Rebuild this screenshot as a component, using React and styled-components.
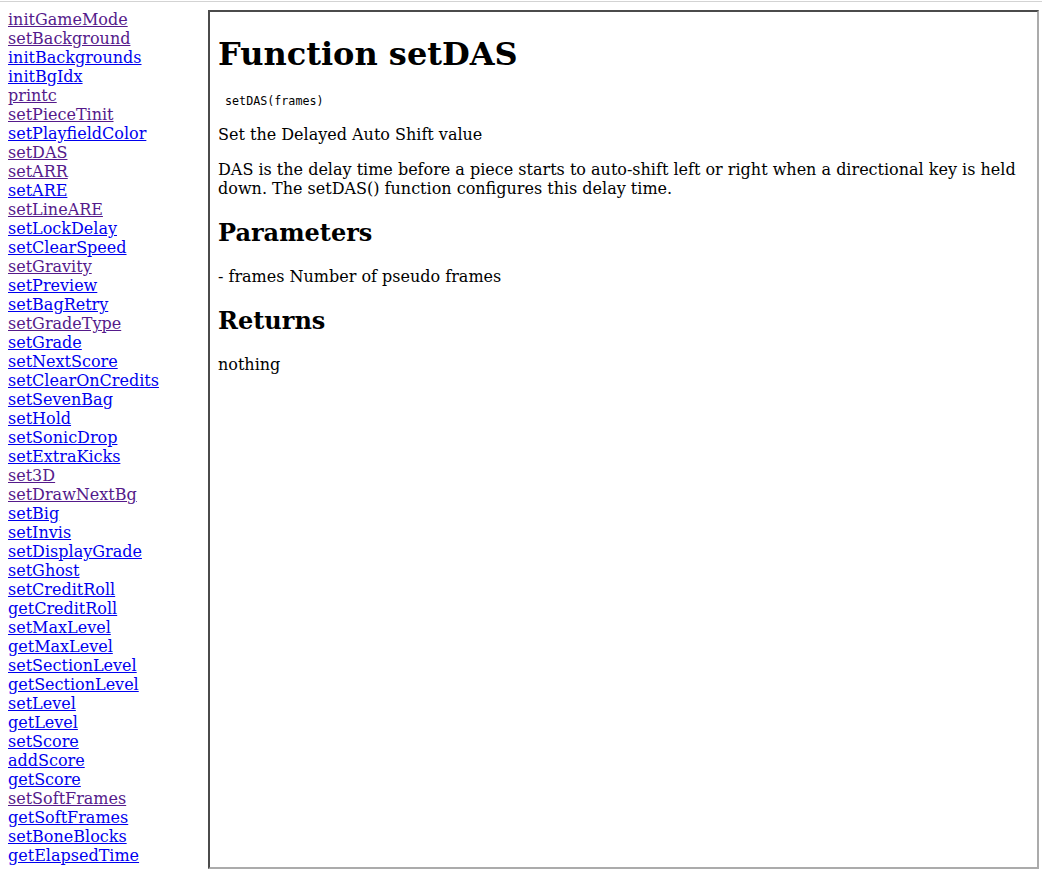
import React from "react";
import styled, { createGlobalStyle } from "styled-components";

const GlobalStyle = createGlobalStyle`
  html, body {
    margin: 0;
    padding: 0;
    background: #ffffff;
  }
  body {
    font-family: "DejaVu Serif", "Liberation Serif", serif;
    font-size: 16px;
    color: #000000;
  }
`;

const TopRule = styled.div`
  height: 1px;
  margin-top: 1px;
  background: #d3d3d3;
`;

const Layout = styled.div`
  display: flex;
  align-items: flex-start;
  padding: 8px 0 0 8px;
`;

const Sidebar = styled.nav`
  width: 200px;
  flex: none;
  display: flex;
  flex-direction: column;
  align-items: flex-start;
`;

const NavLink = styled.a`
  display: block;
  line-height: 19px;
  font-size: 16px;
  font-family: "DejaVu Serif", "Liberation Serif", serif;
  color: ${(p) => (p.$visited ? "#551a8b" : "#0000ee")};
  text-decoration: underline;
`;

const Frame = styled.main`
  box-sizing: border-box;
  flex: none;
  width: 831px;
  height: 859px;
  border-style: solid;
  border-width: 2px;
  border-color: #4b4b4b #ababab #ababab #4b4b4b;
  padding: 0 8px;
  overflow: hidden;
  background: #ffffff;
`;

const Title = styled.h1`
  font-size: 32px;
  font-weight: bold;
  margin: 22.5px 0 21.44px;
`;

const Signature = styled.pre`
  font-family: "DejaVu Sans Mono", "Liberation Mono", monospace;
  font-size: 11.7px;
  line-height: 15px;
  margin: 13px 0;
`;

const Paragraph = styled.p`
  margin: 16px 0;
  line-height: normal;
`;

const SectionTitle = styled.h2`
  font-size: 24px;
  font-weight: bold;
  margin: 19.92px 0;
`;

const links = [
  ["initGameMode", true],
  ["setBackground", true],
  ["initBackgrounds", false],
  ["initBgIdx", false],
  ["printc", true],
  ["setPieceTinit", true],
  ["setPlayfieldColor", false],
  ["setDAS", true],
  ["setARR", true],
  ["setARE", false],
  ["setLineARE", true],
  ["setLockDelay", false],
  ["setClearSpeed", false],
  ["setGravity", true],
  ["setPreview", false],
  ["setBagRetry", false],
  ["setGradeType", true],
  ["setGrade", false],
  ["setNextScore", false],
  ["setClearOnCredits", false],
  ["setSevenBag", false],
  ["setHold", false],
  ["setSonicDrop", false],
  ["setExtraKicks", false],
  ["set3D", true],
  ["setDrawNextBg", true],
  ["setBig", false],
  ["setInvis", false],
  ["setDisplayGrade", false],
  ["setGhost", false],
  ["setCreditRoll", false],
  ["getCreditRoll", false],
  ["setMaxLevel", false],
  ["getMaxLevel", false],
  ["setSectionLevel", false],
  ["getSectionLevel", false],
  ["setLevel", false],
  ["getLevel", false],
  ["setScore", false],
  ["addScore", false],
  ["getScore", false],
  ["setSoftFrames", true],
  ["getSoftFrames", false],
  ["setBoneBlocks", false],
  ["getElapsedTime", false],
];

export default function App() {
  return (
    <>
      <GlobalStyle />
      <TopRule />
      <Layout>
        <Sidebar>
          {links.map(([name, visited]) => (
            <NavLink key={name} href="#" $visited={visited}>
              {name}
            </NavLink>
          ))}
        </Sidebar>
        <Frame>
          <Title>Function setDAS</Title>
          <Signature> setDAS(frames)</Signature>
          <Paragraph>Set the Delayed Auto Shift value</Paragraph>
          <Paragraph>
            DAS is the delay time before a piece starts to auto-shift left or
            right when a directional key is held down. The setDAS() function
            configures this delay time.
          </Paragraph>
          <SectionTitle>Parameters</SectionTitle>
          <Paragraph>- frames Number of pseudo frames</Paragraph>
          <SectionTitle>Returns</SectionTitle>
          <Paragraph>nothing</Paragraph>
        </Frame>
      </Layout>
    </>
  );
}
